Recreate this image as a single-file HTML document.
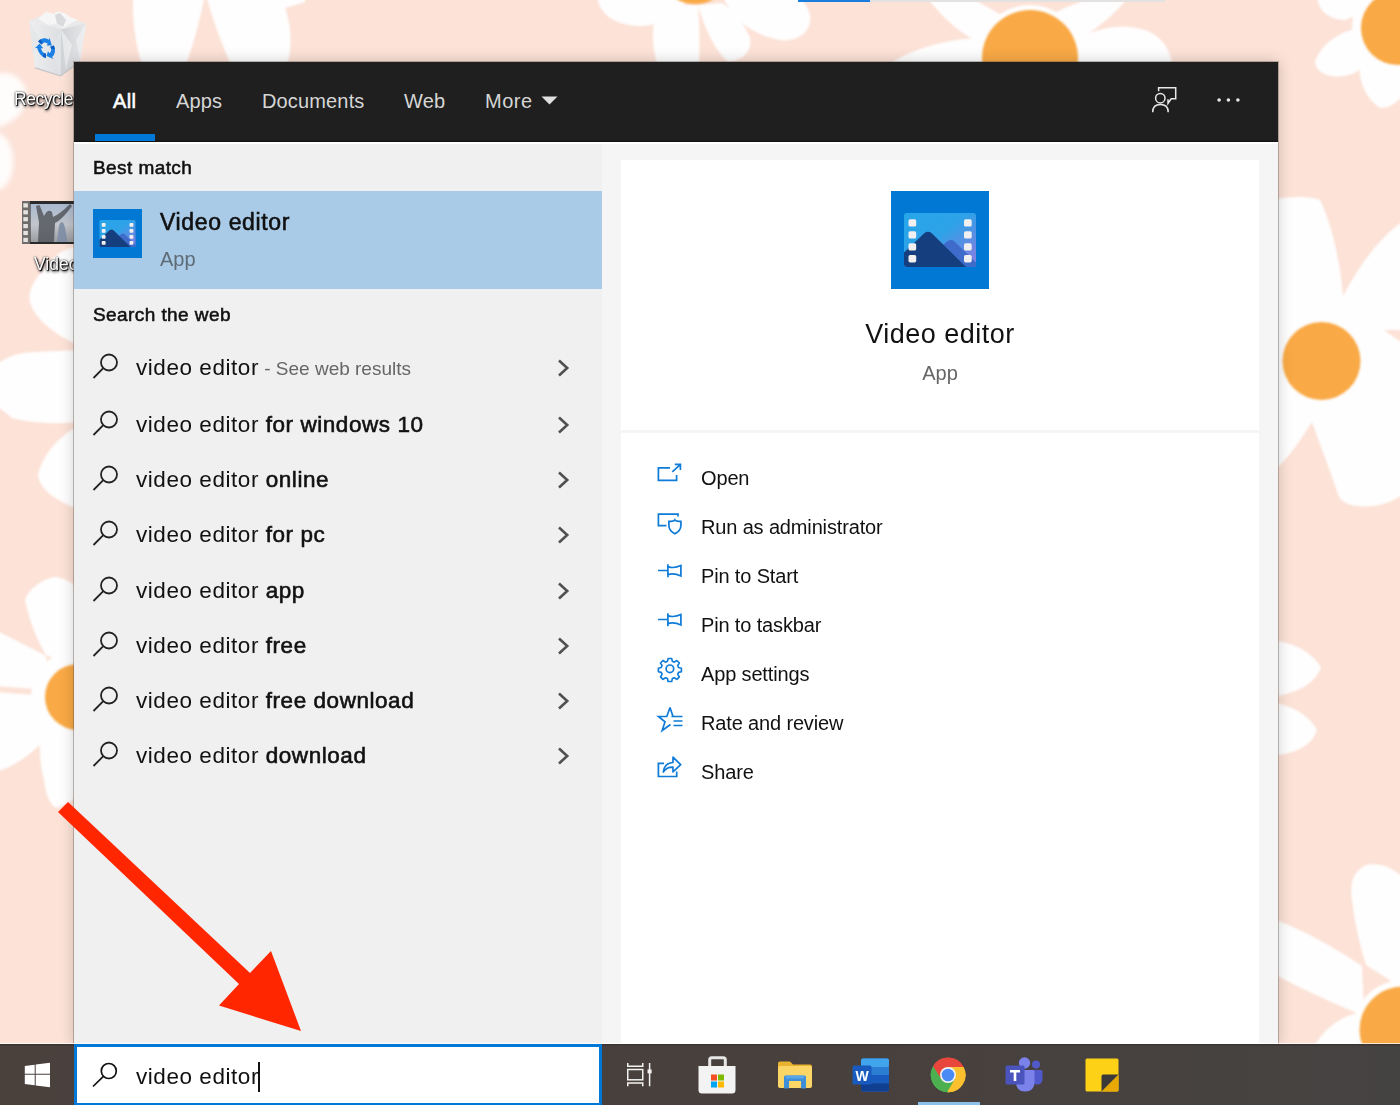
<!DOCTYPE html>
<html><head><meta charset="utf-8"><title>Search</title>
<style>
*{box-sizing:border-box;margin:0;padding:0}
html,body{width:1400px;height:1105px;overflow:hidden;background:#fce2d7;font-family:"Liberation Sans",sans-serif;color:#111}
#wall{position:absolute;left:0;top:0;width:1400px;height:1105px}
#panel{position:absolute;left:74px;top:62px;width:1204px;height:983px;background:#f5f5f5;box-shadow:0 0 0 1px rgba(95,80,72,.38),0 0 14px rgba(0,0,0,.2)}
#hdr{position:absolute;left:0;top:0;width:1204px;height:80px;background:#1f1f1f;box-shadow:inset 0 -1.500px 0 #141414;z-index:2}
#wl{position:absolute;left:0;top:80px;width:1204px;height:1.500px;background:#fff;z-index:2}
#hdr span{position:absolute;top:25px;font-size:20px;line-height:28px;color:#d6d6d6;white-space:nowrap;letter-spacing:.15px}
#hdr .sel{color:#fff;font-weight:normal;-webkit-text-stroke:.55px #fff;letter-spacing:.3px}
#uline{position:absolute;left:21px;top:72px;width:60px;height:7px;background:#0078d7}
#left{position:absolute;left:0;top:79px;width:528px;height:904px;background:#f0f0f0}
.h{position:absolute;left:19px;font-weight:normal;-webkit-text-stroke:.55px #111;letter-spacing:.42px;font-size:19px;line-height:24px;color:#111;white-space:nowrap}
#best{position:absolute;left:0;top:50px;width:528px;height:98px;background:#a9cbe8}
.row{position:absolute;left:0;width:528px;height:55px}
.row .t{position:absolute;left:62px;top:13px;font-size:22.5px;line-height:30px;white-space:nowrap;color:#111;letter-spacing:.55px}
.row .t b{font-weight:normal;-webkit-text-stroke:.6px #111;letter-spacing:.55px}
.row .t i{font-style:normal;font-size:19px;color:#666;letter-spacing:0}
.row svg.m{position:absolute;left:17px;top:12px}
.row svg.c{position:absolute;left:480px;top:17px}
#card1{position:absolute;left:547px;top:98px;width:638px;height:270px;background:#fff}
#card2{position:absolute;left:547px;top:371px;width:638px;height:612px;background:#fff}
.act{position:absolute;left:0;width:638px;height:49px}
.act span{position:absolute;left:80px;top:12px;font-size:20px;line-height:26px;color:#111;white-space:nowrap;letter-spacing:-.15px}
.act svg{position:absolute;left:34px;top:6px}
#task{position:absolute;left:0;top:1044px;width:1400px;height:61px;box-shadow:inset 0 1.500px 0 #3a3533,0 -1px 0 rgba(255,255,255,.75);background:linear-gradient(90deg,#4a403c 0%,#48403d 60%,#454342 100%)}
#sbox{position:absolute;left:74px;top:0;width:528px;height:61px;background:#fff;border:3px solid #0078d7;border-bottom-width:2px}
#stxt{position:absolute;left:59px;top:15px;font-size:22.5px;line-height:30px;letter-spacing:.55px;color:#111;white-space:nowrap}
#caret{position:absolute;left:181px;top:15px;width:2px;height:30px;background:#111}
#cul{position:absolute;left:918px;top:58px;width:62px;height:3px;background:#8cc0ea}
#bt1{position:absolute;left:86px;top:16px;font-size:23px;line-height:30px;font-weight:normal;-webkit-text-stroke:.6px #111;letter-spacing:.64px;color:#111;white-space:nowrap}
#bt2{position:absolute;left:86px;top:55px;font-size:20px;line-height:26px;color:#5f6b75;white-space:nowrap}
#ct1{position:absolute;left:0;top:157px;width:638px;text-align:center;font-size:27px;line-height:34px;color:#111;letter-spacing:.5px}
#ct2{position:absolute;left:0;top:200px;width:638px;text-align:center;font-size:20px;line-height:26px;color:#666}
.dl{position:absolute;text-align:center;font-size:17.500px;line-height:22px;color:#fff;white-space:nowrap;text-shadow:1px 1px 1px #000,0 0 2px #000,1px 2px 3px rgba(0,0,0,.8)}
</style></head><body>
<svg width="0" height="0" style="position:absolute"><defs>
<linearGradient id="g1" x1="0" y1="0" x2="1" y2="1"><stop offset="0" stop-color="#27a6e9"/><stop offset=".45" stop-color="#2ea2e8"/><stop offset=".8" stop-color="#6c86e2"/><stop offset="1" stop-color="#8d7fe0"/></linearGradient>
<symbol id="vicon" viewBox="0 0 98 98"><rect width="98" height="98" fill="#0078d4"/>
<rect x="13" y="22" width="72" height="54" rx="3" fill="url(#g1)"/>
<path d="M52 54 Q58.500 46.500 63 50 L85 71.500 V73 Q85 76 82 76 H60 Z" fill="#3f6bcb"/>
<path d="M16 76 Q13 76 13 73 V61.500 L33.500 42 Q37 39.500 40.500 42 L75 76 Z" fill="#153e7e"/>
<g fill="#f1efef"><rect x="17.500" y="28.200" width="7.700" height="7.400" rx="1.600"/><rect x="17.500" y="40.200" width="7.700" height="7.400" rx="1.600"/><rect x="17.500" y="52.200" width="7.700" height="7.400" rx="1.600"/><rect x="17.500" y="64" width="7.700" height="7.400" rx="1.600"/>
<rect x="73" y="28.200" width="7.700" height="7.400" rx="1.600"/><rect x="73" y="40.200" width="7.700" height="7.400" rx="1.600"/><rect x="73" y="52.200" width="7.700" height="7.400" rx="1.600"/><rect x="73" y="64" width="7.700" height="7.400" rx="1.600"/></g>
</symbol></defs></svg>
<svg id="wall" viewBox="0 0 1400 1105"><defs><filter id="bl" x="-5%" y="-5%" width="110%" height="110%"><feGaussianBlur stdDeviation="1.2"/></filter><filter id="bl3" x="-30%" y="-30%" width="160%" height="160%"><feGaussianBlur stdDeviation="2.5"/></filter><filter id="bl2" x="-20%" y="-20%" width="140%" height="140%"><feGaussianBlur stdDeviation="4"/></filter></defs>
<rect width="1400" height="1105" fill="#fce2d7"/>
<g filter="url(#bl)" fill="#fefefe">
<!-- top petals -->
<path d="M133 -5 C132 25 137 55 146 75 L182 75 C192 50 200 20 205 -5 Z"/>
<path d="M206 -5 C214 25 226 55 236 75 L284 75 C292 55 293 30 285 8 L305 2 L305 -5 Z"/>
<!-- top flower near 700 -->
<path d="M598 -5 C596 12 615 26 640 26 C655 26 668 20 680 10 L690 -5 Z"/>
<path d="M655 18 C650 40 655 60 662 80 L698 80 C700 55 700 30 698 5 L680 5 Z"/>
<path d="M698 5 C705 30 715 50 728 62 C745 60 752 50 750 38 C745 25 735 12 722 3 Z"/>
<path d="M722 -5 C730 15 750 35 780 40 C800 42 812 30 810 15 C808 5 800 -2 795 -5 Z"/>
<!-- flower 2 petals -->
<path d="M925 -5 C940 15 960 35 985 45 L1010 20 C990 8 975 0 965 -5 Z"/>
<path d="M1050 15 C1070 5 1085 0 1100 -5 L1130 -5 C1115 15 1095 30 1075 42 Z"/>
<path d="M985 38 C950 38 915 48 893 62 L893 80 L990 80 Z"/>
<path d="M1075 40 C1100 25 1135 22 1155 35 C1168 45 1172 55 1172 70 L1070 80 Z"/>
<!-- top-right flower petals -->
<path d="M1318 -5 C1316 10 1330 20 1345 20 L1370 10 L1365 -5 Z"/>
<path d="M1362 28 C1340 30 1320 45 1315 62 C1316 75 1335 80 1352 74 C1362 70 1368 62 1372 55 Z"/>
<path d="M1360 62 C1358 80 1365 98 1380 108 C1392 108 1400 100 1405 92 L1405 60 Z"/>
<circle cx="78" cy="697" r="47"/><circle cx="1398" cy="28" r="46"/><circle cx="1403" cy="1030" r="50"/><circle cx="1030" cy="58" r="53"/>
<!-- right middle flower -->
<path d="M1270 200 C1290 196 1310 196 1320 200 C1332 225 1340 260 1343 296 C1360 265 1378 238 1405 220 L1405 330 L1384 330 L1405 345 L1405 452 C1400 440 1385 415 1368 396 L1405 396 L1405 493 C1392 503 1375 508 1358 506 C1345 505 1340 500 1338 494 C1330 470 1320 445 1312 422 C1300 440 1290 458 1270 474 Z"/>
<!-- right small petals -->
<path d="M1270 641 C1290 640 1312 652 1321 667 C1315 685 1295 694 1270 697 Z"/>
<path d="M1270 702 C1292 705 1310 716 1317 730 C1312 746 1295 754 1270 756 Z"/>
<!-- bottom-right flower -->
<path d="M1405 880 C1395 868 1380 862 1366 865 C1352 872 1350 885 1352 900 C1355 925 1360 945 1366 965 L1405 990 Z"/>
<path d="M1270 918 C1300 928 1335 948 1362 966 L1364 1016 C1330 1002 1300 988 1270 972 Z"/>
<path d="M1362 1012 C1345 1015 1325 1025 1312 1050 L1370 1050 Z"/>
<!-- left strip petals -->
<path d="M-5 74 C10 70 24 78 26 92 C28 108 18 122 -5 128 Z" opacity=".95" filter="url(#bl3)"/>
<path d="M-5 132 C8 134 14 150 13 165 C12 180 5 190 -5 190 Z" opacity=".95" filter="url(#bl3)"/>
<path d="M80 247 C68 247 58 252 48 264 C38 276 27 288 30 302 C34 318 55 335 80 346 Z"/>
<path d="M-5 365 C10 355 22 352 35 352 L80 350 L80 422 C60 424 35 424 12 418 C5 412 0 408 -5 405 Z"/>
<path d="M80 425 C60 435 42 455 38 475 C40 490 55 500 80 510 Z"/>
<!-- left flower (orange at 78,697) -->
<path d="M54 577 C40 580 28 590 25 600 C30 625 40 645 46 655 L80 670 L80 590 C72 582 62 577 54 577 Z"/>
<path d="M-5 630 C15 640 35 650 46 656 L50 690 L-5 686 Z"/>
<path d="M-5 692 L48 696 L50 735 C35 750 20 765 -5 772 Z"/>
<path d="M42 728 C38 745 40 765 44 780 C46 795 50 805 56 808 C65 805 72 800 80 795 L80 725 Z"/>
</g>
<g filter="url(#bl)" fill="#f9a945">
<ellipse cx="695" cy="-6" rx="21" ry="10"/>
<circle cx="1030" cy="58" r="48"/>
<ellipse cx="1398" cy="28" rx="37" ry="37"/>
<circle cx="1321.500" cy="361" r="39"/>
<circle cx="1403" cy="1030" r="43.500"/>
<circle cx="78" cy="697" r="33"/>
</g>
<rect x="798" y="0" width="72" height="2" fill="#1b7de0"/><rect x="870" y="0" width="295" height="2" fill="#e4e2e1"/>
</svg>
<svg id="desk" width="120" height="320" viewBox="0 0 120 320" style="position:absolute;left:0;top:0">
<defs><linearGradient id="bg1" x1="0" y1="0" x2="1" y2="0"><stop offset="0" stop-color="#eeeff1"/><stop offset="1" stop-color="#dcdee1"/></linearGradient>
<linearGradient id="bg2" x1="0" y1="0" x2="1" y2="0"><stop offset="0" stop-color="#cfd2d5"/><stop offset="1" stop-color="#e6e7e9"/></linearGradient>
<linearGradient id="ph" x1="0" y1="0" x2="0" y2="1"><stop offset="0" stop-color="#a9b9d0"/><stop offset=".55" stop-color="#c3c6cc"/><stop offset="1" stop-color="#9a9c9f"/></linearGradient></defs>
<!-- recycle bin -->
<path d="M29.200 21 L48 13 L86.200 23.200 L61 29.400 Z" fill="#e9eaec"/>
<path d="M38 19 L46 11.500 L53 14 L58 11.500 L66 13.500 L70 17 L78 19.500 L70 24 L63 28 L56 24 L48 25 Z" fill="#f6f6f7"/>
<path d="M55 15 L60 13 L66 20 L63 27 L57 24 Z" fill="#d9dadc"/>
<path d="M29.200 21 L61 29.400 L60.500 75.800 L35 67.900 Z" fill="url(#bg1)"/>
<path d="M61 29.400 L86.200 23.200 L80.300 61.500 L60.500 75.800 Z" fill="url(#bg2)"/>
<path d="M29.200 21 L40 40 L33 55 Z M61 29.400 L52 50 L60.500 75.800 Z" fill="#e3e5e7" opacity=".7"/><path d="M61 29.400 L72 45 L66 70 Z M86.200 23.200 L76 40 L80.300 61.500 Z" fill="#f4f4f5" opacity=".6"/><path d="M35 67.900 L60.500 75.800 L80.300 61.500" fill="none" stroke="#c4c6c9" stroke-width="1.200"/>
<g transform="translate(46 48.3) skewY(14) scale(.98 1.05)"><path d="M-7.97 -4.60 A9.2 9.2 0 0 1 2.84 -8.75 L3.52 -10.84 L5.97 -4.03 L0.93 -2.85 L1.61 -4.95 A5.2 5.2 0 0 0 -4.50 -2.60 Z" fill="#1a80e6"/><path d="M-7.97 -4.60 A9.2 9.2 0 0 1 -5.66 -7.25 L-3.20 -4.10 A5.2 5.2 0 0 0 -4.50 -2.60 Z" fill="#0f5dc2"/><path d="M7.97 -4.60 A9.2 9.2 0 0 1 6.16 6.84 L7.63 8.47 L0.50 7.18 L2.01 2.23 L3.48 3.86 A5.2 5.2 0 0 0 4.50 -2.60 Z" fill="#1a80e6"/><path d="M7.97 -4.60 A9.2 9.2 0 0 1 9.11 -1.28 L5.15 -0.72 A5.2 5.2 0 0 0 4.50 -2.60 Z" fill="#0f5dc2"/><path d="M0.00 9.20 A9.2 9.2 0 0 1 -9.00 1.91 L-11.15 2.37 L-6.47 -3.16 L-2.93 0.62 L-5.09 1.08 A5.2 5.2 0 0 0 0.00 5.20 Z" fill="#1a80e6"/><path d="M0.00 9.20 A9.2 9.2 0 0 1 -3.45 8.53 L-1.95 4.82 A5.2 5.2 0 0 0 0.00 5.20 Z" fill="#0f5dc2"/></g>
<!-- video file -->
<rect x="22" y="201" width="7.500" height="43" fill="#6d6d6d"/>
<g fill="#e6e2df"><rect x="23.300" y="203.300" width="4.600" height="4.200"/><rect x="23.300" y="210.200" width="4.600" height="4.200"/><rect x="23.300" y="217.100" width="4.600" height="4.200"/><rect x="23.300" y="224" width="4.600" height="4.200"/><rect x="23.300" y="230.900" width="4.600" height="4.200"/><rect x="23.300" y="237.800" width="4.600" height="4.200"/></g>
<rect x="29.500" y="201" width="70" height="43" fill="#2b2b2b"/>
<rect x="30.500" y="204" width="68" height="38" fill="url(#ph)"/>
<path d="M36 206 L39.500 205 L44 216 Q48 208 52 212 L53 217 Q60 214 70 204 L72 206 Q62 220 55 223 L54 242 L38 242 L39 222 Z" fill="#55585e" opacity=".85"/>
<path d="M57 242 L58.500 230 Q59 223 61.500 222 Q64 222 65 228 L67.500 242 Z" fill="#7f8ea6" opacity=".9"/>
</svg>
<div class="dl" style="left:14px;top:88px;text-align:left;letter-spacing:-.45px">Recycle Bin</div>
<div class="dl" style="left:34px;top:253px;text-align:left">Video</div>
<div id="panel">
 <div id="hdr">
  <span class="sel" style="left:39px">All</span>
  <span style="left:102px">Apps</span>
  <span style="left:188px">Documents</span>
  <span style="left:330px">Web</span>
  <span style="left:411px;letter-spacing:.5px">More</span>
  <svg width="30" height="30" viewBox="0 0 30 30" style="position:absolute;left:1076px;top:23px"><g fill="none" stroke="#e8e8e8" stroke-width="1.500"><circle cx="10.300" cy="13.200" r="4.700"/><path d="M2.700 27.200 Q2.700 19.500 10.400 19.500 Q18.200 19.500 18.200 27.200"/><path d="M8.600 6.200 V2.700 H25.700 V13.700 H21.200 L18 18.300 V14.200"/></g></svg>
  <svg width="30" height="10" viewBox="0 0 30 10" style="position:absolute;left:1141px;top:33px"><g fill="#e8e8e8"><circle cx="4.100" cy="5" r="1.800"/><circle cx="13.400" cy="5" r="1.800"/><circle cx="22.900" cy="5" r="1.800"/></g></svg>
  <svg width="18" height="10" viewBox="0 0 18 10" style="position:absolute;left:467px;top:34px"><path d="M0.500 0.500 H16.500 L8.500 8.500 Z" fill="#e0e0e0"/></svg>
  <div id="uline"></div>
 </div>
 <div id="wl"></div>
 <div id="left">
  <div class="h" style="top:15px">Best match</div>
  <div id="best"><svg id="bicon" width="49" height="49" viewBox="0 0 98 98" style="position:absolute;left:19px;top:18px"><use href="#vicon"/></svg><div id="bt1">Video editor</div><div id="bt2">App</div></div>
  <div class="h" style="top:162px">Search the web</div>
  <div class="row" style="top:199px"><svg class="m" width="30" height="30" viewBox="0 0 30 30"><circle cx="18" cy="10.5" r="8" fill="none" stroke="#222" stroke-width="1.8"/><path d="M12.3 16.2 L2.5 26" stroke="#222" stroke-width="1.8" fill="none"/></svg><div class="t">video editor<i> - See web results</i></div><svg class="c" width="20" height="22" viewBox="0 0 20 22"><path d="M5 3.5 L13.2 11 L5 18.5" fill="none" stroke="#505050" stroke-width="2.6"/></svg></div>
  <div class="row" style="top:256px"><svg class="m" width="30" height="30" viewBox="0 0 30 30"><circle cx="18" cy="10.5" r="8" fill="none" stroke="#222" stroke-width="1.8"/><path d="M12.3 16.2 L2.5 26" stroke="#222" stroke-width="1.8" fill="none"/></svg><div class="t">video editor <b>for windows 10</b></div><svg class="c" width="20" height="22" viewBox="0 0 20 22"><path d="M5 3.5 L13.2 11 L5 18.5" fill="none" stroke="#505050" stroke-width="2.6"/></svg></div>
  <div class="row" style="top:311px"><svg class="m" width="30" height="30" viewBox="0 0 30 30"><circle cx="18" cy="10.5" r="8" fill="none" stroke="#222" stroke-width="1.8"/><path d="M12.3 16.2 L2.5 26" stroke="#222" stroke-width="1.8" fill="none"/></svg><div class="t">video editor <b>online</b></div><svg class="c" width="20" height="22" viewBox="0 0 20 22"><path d="M5 3.5 L13.2 11 L5 18.5" fill="none" stroke="#505050" stroke-width="2.6"/></svg></div>
  <div class="row" style="top:366px"><svg class="m" width="30" height="30" viewBox="0 0 30 30"><circle cx="18" cy="10.5" r="8" fill="none" stroke="#222" stroke-width="1.8"/><path d="M12.3 16.2 L2.5 26" stroke="#222" stroke-width="1.8" fill="none"/></svg><div class="t">video editor <b>for pc</b></div><svg class="c" width="20" height="22" viewBox="0 0 20 22"><path d="M5 3.5 L13.2 11 L5 18.5" fill="none" stroke="#505050" stroke-width="2.6"/></svg></div>
  <div class="row" style="top:422px"><svg class="m" width="30" height="30" viewBox="0 0 30 30"><circle cx="18" cy="10.5" r="8" fill="none" stroke="#222" stroke-width="1.8"/><path d="M12.3 16.2 L2.5 26" stroke="#222" stroke-width="1.8" fill="none"/></svg><div class="t">video editor <b>app</b></div><svg class="c" width="20" height="22" viewBox="0 0 20 22"><path d="M5 3.5 L13.2 11 L5 18.5" fill="none" stroke="#505050" stroke-width="2.6"/></svg></div>
  <div class="row" style="top:477px"><svg class="m" width="30" height="30" viewBox="0 0 30 30"><circle cx="18" cy="10.5" r="8" fill="none" stroke="#222" stroke-width="1.8"/><path d="M12.3 16.2 L2.5 26" stroke="#222" stroke-width="1.8" fill="none"/></svg><div class="t">video editor <b>free</b></div><svg class="c" width="20" height="22" viewBox="0 0 20 22"><path d="M5 3.5 L13.2 11 L5 18.5" fill="none" stroke="#505050" stroke-width="2.6"/></svg></div>
  <div class="row" style="top:532px"><svg class="m" width="30" height="30" viewBox="0 0 30 30"><circle cx="18" cy="10.5" r="8" fill="none" stroke="#222" stroke-width="1.8"/><path d="M12.3 16.2 L2.5 26" stroke="#222" stroke-width="1.8" fill="none"/></svg><div class="t">video editor <b>free download</b></div><svg class="c" width="20" height="22" viewBox="0 0 20 22"><path d="M5 3.5 L13.2 11 L5 18.5" fill="none" stroke="#505050" stroke-width="2.6"/></svg></div>
  <div class="row" style="top:587px"><svg class="m" width="30" height="30" viewBox="0 0 30 30"><circle cx="18" cy="10.5" r="8" fill="none" stroke="#222" stroke-width="1.8"/><path d="M12.3 16.2 L2.5 26" stroke="#222" stroke-width="1.8" fill="none"/></svg><div class="t">video editor <b>download</b></div><svg class="c" width="20" height="22" viewBox="0 0 20 22"><path d="M5 3.5 L13.2 11 L5 18.5" fill="none" stroke="#505050" stroke-width="2.6"/></svg></div>
 </div>
 <div id="card1"><svg width="98" height="98" viewBox="0 0 98 98" style="position:absolute;left:270px;top:31px"><use href="#vicon"/></svg><div id="ct1">Video editor</div><div id="ct2">App</div></div>
 <div id="card2">
  <div class="act" style="top:20px"><svg width="30" height="30" viewBox="0 0 30 30"><path d="M15 8.9 H3.4 V21.4 H21.6 V16" fill="none" stroke="#0f7bd8" stroke-width="1.7"/><path d="M17.3 12.9 L25.2 5.6 M19.8 5.4 H25.4 V11" fill="none" stroke="#0f7bd8" stroke-width="1.7"/></svg><span>Open</span></div>
  <div class="act" style="top:69px"><svg width="30" height="30" viewBox="0 0 30 30"><path d="M23 8.6 V6.2 H3.4 V17.6 H11.5" fill="none" stroke="#0f7bd8" stroke-width="1.7"/><path d="M13.9 13.4 Q19 13.4 19.9 11.8 Q20.8 13.4 25.9 13.4 V17.5 Q25.9 22.5 19.9 25.8 Q13.9 22.5 13.9 17.5 Z" fill="none" stroke="#0f7bd8" stroke-width="1.7"/></svg><span>Run as administrator</span></div>
  <div class="act" style="top:118px"><svg width="30" height="30" viewBox="0 0 30 30"><path d="M3 13.5 H12.9 M12.9 7.3 V20.3 M12.9 9.6 Q19 11.8 25.9 8.6 V19 Q19 15.6 12.9 17.6" fill="none" stroke="#0f7bd8" stroke-width="1.7"/></svg><span>Pin to Start</span></div>
  <div class="act" style="top:167px"><svg width="30" height="30" viewBox="0 0 30 30"><path d="M3 13.5 H12.9 M12.9 7.3 V20.3 M12.9 9.6 Q19 11.8 25.9 8.6 V19 Q19 15.6 12.9 17.6" fill="none" stroke="#0f7bd8" stroke-width="1.7"/></svg><span>Pin to taskbar</span></div>
  <div class="act" style="top:216px"><svg width="30" height="30" viewBox="0 0 30 30"><circle cx="14.9" cy="13.8" r="3.8" fill="none" stroke="#0f7bd8" stroke-width="1.7"/><path d="M13 2.5h4l.7 3.2 2.2.9 2.8-1.8 2.8 2.8-1.8 2.8.9 2.2 3.2.7v4l-3.2.7-.9 2.2 1.8 2.8-2.8 2.8-2.8-1.8-2.2.9-.7 3.2h-4l-.7-3.2-2.2-.9-2.8 1.8-2.8-2.8 1.8-2.8-.9-2.2-3.2-.7v-4l3.2-.7.9-2.2-1.8-2.8 2.8-2.8 2.8 1.8 2.2-.9z" transform="translate(1.4 1.2) scale(.9)" fill="none" stroke="#0f7bd8" stroke-width="1.8" stroke-linejoin="round"/></svg><span>App settings</span></div>
  <div class="act" style="top:265px"><svg width="30" height="30" viewBox="0 0 30 30"><g transform="translate(0 1)"><path d="M15 2.5 L18 11.5 M15 2.5 L11.8 11.5 H3.5 L10 16.8 L7.2 25.5 L15.5 19.5" fill="none" stroke="#0f7bd8" stroke-width="1.7" stroke-linejoin="miter"/><path d="M16.5 11.5 H27.5 M18.5 16 H27.5 M18.5 20.5 H27.5" stroke="#0f7bd8" stroke-width="1.7"/></g></svg><span>Rate and review</span></div>
  <div class="act" style="top:314px"><svg width="30" height="30" viewBox="0 0 30 30"><path d="M9 10.400 H3.400 V23.500 H21.700 V18.500" fill="none" stroke="#0f7bd8" stroke-width="1.7"/><path d="M8.300 19 Q9.300 10 18 9.500 V4.200 L25.700 11.700 L18 18.900 V14.200 Q12 13.900 8.300 19 Z" fill="none" stroke="#0f7bd8" stroke-width="1.7" stroke-linejoin="round"/></svg><span>Share</span></div>
 </div>
</div>
<div id="task">
 <svg width="28" height="28" viewBox="0 0 28 28" style="position:absolute;left:24px;top:17px"><g fill="#fff"><path d="M0.800 5 L10.700 3.700 V12.800 H0.800 Z"/><path d="M11.700 3.600 L26 1.700 V12.800 H11.700 Z"/><path d="M0.800 13.800 H10.700 V24.300 L0.800 23 Z"/><path d="M11.700 13.800 H26 V26.300 L11.700 24.400 Z"/></g></svg>
 <div id="sbox"><svg width="30" height="30" viewBox="0 0 30 30" style="position:absolute;left:14px;top:12px"><circle cx="17.800" cy="12" r="7.500" fill="none" stroke="#111" stroke-width="1.700"/><path d="M12.400 17.400 L2 27.500" stroke="#111" stroke-width="1.700" fill="none"/></svg><div id="stxt">video editor</div><div id="caret"></div></div>
 <svg id="tv" width="28" height="28" viewBox="0 0 28 28" style="position:absolute;left:625px;top:16px"><g fill="none" stroke="#f2f2f2" stroke-width="1.500"><rect x="2.750" y="9.500" width="15" height="10.300"/><path d="M2.750 3 V6.300 H17.750 V3 M2.750 26.200 V22.900 H17.750 V26.200 M24.600 3 V26.200"/><rect x="23.300" y="10.200" width="2.600" height="2.400" fill="#f2f2f2"/></g></svg>
 <svg id="store" width="40" height="40" viewBox="0 0 40 40" style="position:absolute;left:697px;top:11px"><path d="M12.700 12 V4.800 Q12.700 2.800 14.700 2.800 H26.300 Q28.300 2.800 28.300 4.800 V12" fill="none" stroke="#e6e6e6" stroke-width="3"/><path d="M1.500 11 H38.500 V35 Q38.500 38.500 35 38.500 H5 Q1.500 38.500 1.500 35 Z" fill="#f3f3f3"/><rect x="14" y="19.500" width="6" height="6" fill="#f25022"/><rect x="21" y="19.500" width="6" height="6" fill="#7fba00"/><rect x="14" y="26.500" width="6" height="6" fill="#00a4ef"/><rect x="21" y="26.500" width="6" height="6" fill="#ffb900"/></svg>
 <svg id="expl" width="36" height="30" viewBox="0 0 36 30" style="position:absolute;left:777px;top:16px"><path d="M1 3.500 Q1 1.500 3 1.500 H13 L16 4.500 H33 Q35 4.500 35 6.500 V26 H1 Z" fill="#e9b32f"/><path d="M1 8 Q1 6 3 6 H33 Q35 6 35 8 V26 Q35 28 33 28 H3 Q1 28 1 26 Z" fill="#fbd667"/><path d="M7 28.500 V17 Q7 15.500 8.500 15.500 H27.500 Q29 15.500 29 17 V28.500 H24 V21 H12 V28.500 Z" fill="#3f8fd8"/><rect x="9" y="15.500" width="18" height="3" fill="#5aa6e8"/></svg>
 <svg id="word" width="38" height="34" viewBox="0 0 38 34" style="position:absolute;left:852px;top:14px"><rect x="9" y="0.500" width="28" height="33" rx="2" fill="#2b7cd3"/><rect x="9" y="0.500" width="28" height="8.500" rx="2" fill="#41a5ee"/><rect x="9" y="17" width="28" height="8.300" fill="#185abd"/><path d="M9 25.200 H37 V31.500 Q37 33.500 35 33.500 H11 Q9 33.500 9 31.500 Z" fill="#103f91"/><rect x="0.500" y="7.500" width="19" height="19" rx="1.500" fill="#185abd"/><text x="10" y="22.500" font-family="Liberation Sans, sans-serif" font-weight="bold" font-size="14" fill="#fff" text-anchor="middle">W</text></svg>
 <svg id="chrome" width="36" height="36" viewBox="-18 -18 36 36" style="position:absolute;left:930px;top:13px"><circle r="17.200" fill="#4caf50"/><path d="M0 0 L-14.900 -8.600 A17.200 17.200 0 0 1 14.900 -8.600 Z" fill="#e8453c"/><path d="M0 0 L14.900 -8.600 A17.200 17.200 0 0 1 0 17.200 Z" fill="#fbc02d"/><path d="M0 0 L0 17.200 A17.200 17.200 0 0 1 -14.900 -8.600 Z" fill="#4caf50"/><path d="M0 -8 H15.600 A17.200 17.200 0 0 0 -14.900 -8.600 L-7 3.900 Z" fill="#e8453c"/><path d="M6.900 4 L-0.900 17.200 A17.200 17.200 0 0 0 15.600 -8 H0 Z" fill="#fbc02d"/><path d="M-6.900 4 L-14.900 -8.600 A17.200 17.200 0 0 0 -0.900 17.200 L6.900 4 Z" fill="#4caf50"/><circle r="8" fill="#f1f1f1"/><circle r="6.300" fill="#4a8af4"/></svg>
 <div id="cul"></div>
 <svg id="teams" width="38" height="36" viewBox="0 0 38 36" style="position:absolute;left:1005px;top:13px"><circle cx="31" cy="7.500" r="4" fill="#5059c9"/><path d="M26 13 H36 Q37.500 13 37.500 14.500 V22 Q37.500 27.500 32 27.500 Q26 27.500 26 22 Z" fill="#5059c9"/><circle cx="19.500" cy="6" r="5.700" fill="#7b83eb"/><path d="M11 13 H28 Q29.500 13 29.500 14.500 V25 Q29.500 34.500 20 34.500 Q11 34.500 11 25 Z" fill="#7b83eb"/><rect x="0.500" y="8.500" width="19" height="19" rx="1.500" fill="#4b53bc"/><path d="M5 13 H15 V15.500 H11.300 V24 H8.700 V15.500 H5 Z" fill="#fff"/></svg>
 <svg id="sticky" width="34" height="34" viewBox="0 0 34 34" style="position:absolute;left:1085px;top:14px"><path d="M0.500 2 Q0.500 0.500 2 0.500 H32 Q33.500 0.500 33.500 2 V32 Q33.500 33.500 32 33.500 H2 Q0.500 33.500 0.500 32 Z" fill="#fcd116"/><path d="M33.500 16.500 V32 Q33.500 33.500 32 33.500 H16.500 Z" fill="#e8a806"/><path d="M16.500 33.500 V18 Q16.500 16.500 18 16.500 H33.500 Z" fill="#3b3a39"/></svg>
</div>
<svg id="arrow" width="1400" height="1105" viewBox="0 0 1400 1105" style="position:absolute;left:0;top:0;pointer-events:none"><polygon points="68,802 250,973 271,951 301,1031 219,1005.500 239,984 58,812" fill="#ff2600"/></svg>
</body></html>
